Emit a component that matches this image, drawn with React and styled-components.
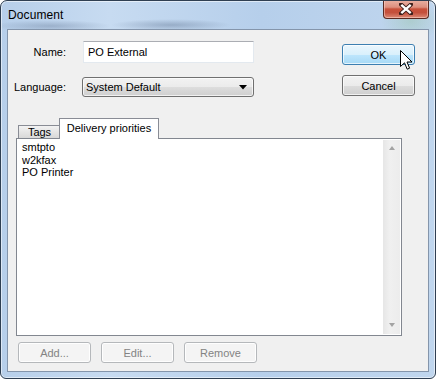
import React from "react";
import styled, { createGlobalStyle } from "styled-components";

const Global = createGlobalStyle`
  html, body { margin: 0; padding: 0; background: #ffffff; }
  body { font-family: "Liberation Sans", Arial, sans-serif; }
  * { box-sizing: border-box; }
`;

const Window = styled.div`
  position: relative;
  width: 436px;
  height: 379px;
  border: 1px solid #2f3f52;
  border-radius: 7px 7px 6px 6px;
  background:
    radial-gradient(ellipse 60px 6px at 50px 25px, rgba(90,110,140,0.35), transparent),
    radial-gradient(ellipse 60px 6px at 170px 24px, rgba(90,110,140,0.4), transparent),
    radial-gradient(ellipse 30px 20px at 410px 20px, rgba(140,190,150,0.35), transparent),
    linear-gradient(to right, #b7cfea 0%, #c7dbf1 25%, #b6cfeb 60%, #c0d6ee 100%);
  box-shadow: inset 0 0 0 1px rgba(255,255,255,0.55);
  display: flex;
  flex-direction: column;
  padding: 0 6px 6px 6px;
  overflow: hidden;
`;

const TitleBar = styled.div`
  height: 28px;
  display: flex;
  align-items: flex-start;
  justify-content: space-between;
`;

const Title = styled.div`
  font-size: 12px;
  color: #000;
  margin-top: 7px;
  margin-left: 1px;
  letter-spacing: 0.1px;
`;

const CloseButton = styled.div`
  width: 46px;
  height: 19px;
  margin-top: -1px;
  border: 1px solid #5a2a22;
  border-top: none;
  border-radius: 0 0 4px 4px;
  background: linear-gradient(
    to bottom,
    #eab2a4 0%,
    #dd8f7e 40%,
    #c8503a 50%,
    #c4503c 70%,
    #dc8a76 100%
  );
  box-shadow: inset 0 0 0 1px rgba(255,220,210,0.5);
  display: flex;
  align-items: center;
  justify-content: center;
`;

const Panel = styled.div`
  flex: 1;
  border: 1px solid #8495ab;
  background: #f0f0f0;
  display: flex;
  flex-direction: column;
`;

const TopArea = styled.div`
  display: flex;
  justify-content: space-between;
`;

const Form = styled.div`
  display: grid;
  grid-template-columns: 58px 172px;
  column-gap: 16px;
  row-gap: 14px;
  padding-top: 11px;
  align-items: center;
`;

const Label = styled.div`
  font-size: 11px;
  color: #000;
  text-align: right;
`;

const TextInput = styled.div`
  height: 22px;
  margin-left: 1px;
  background: #fff;
  border: 1px solid #e3e9ef;
  border-top-color: #abadb3;
  font-size: 11px;
  display: flex;
  align-items: center;
  padding-left: 4px;
  color: #000;
`;

const Select = styled.div`
  height: 20px;
  border: 1px solid #707070;
  border-radius: 3px;
  background: linear-gradient(to bottom, #f2f2f2 0%, #ebebeb 50%, #dddddd 51%, #cfcfcf 100%);
  box-shadow: inset 0 0 0 1px rgba(255,255,255,0.7);
  font-size: 11px;
  display: flex;
  align-items: center;
  justify-content: space-between;
  padding: 0 6px 0 3px;
  color: #000;
`;

const SideButtons = styled.div`
  display: flex;
  flex-direction: column;
  gap: 10px;
  padding-top: 14px;
  padding-right: 13px;
`;

const Button = styled.div`
  width: ${(p) => p.$w || 74}px;
  height: 21px;
  border-radius: 3px;
  font-size: 11px;
  display: flex;
  align-items: center;
  justify-content: center;
  border: 1px solid ${(p) => (p.$hot ? "#3c7fb1" : p.$disabled ? "#b5b8bb" : "#707070")};
  color: ${(p) => (p.$disabled ? "#838383" : "#000")};
  background: ${(p) =>
    p.$hot
      ? "linear-gradient(to bottom, #eaf6fd 0%, #d9f0fc 50%, #bee6fd 51%, #a7d9f5 100%)"
      : p.$disabled
      ? "#f4f4f4"
      : "linear-gradient(to bottom, #f2f2f2 0%, #ebebeb 50%, #dddddd 51%, #cfcfcf 100%)"};
  box-shadow: inset 0 0 0 1px rgba(255,255,255,${(p) => (p.$disabled ? 0.9 : 0.7)});
`;

const TabArea = styled.div`
  margin: 21px 0 0 8px;
  width: 386px;
  display: flex;
  flex-direction: column;
`;

const TabStrip = styled.div`
  display: flex;
  align-items: flex-end;
  height: 20px;
  padding-left: 2px;
  position: relative;
  z-index: 1;
`;

const Tab = styled.div`
  font-size: 11px;
  color: #000;
  border: 1px solid #898c95;
  border-bottom: none;
  display: flex;
  align-items: center;
  justify-content: center;
  ${(p) =>
    p.$active
      ? `
    height: 21px;
    margin-bottom: -1px;
    margin-left: -1px;
    width: 100px;
    background: #ffffff;
    padding-bottom: 2px;
  `
      : `
    height: 13px;
    width: 42px;
    background: linear-gradient(to bottom, #f2f2f2, #d8d8d8);
    border-right: none;
    line-height: 11px;
  `}
`;

const ListBox = styled.div`
  height: 198px;
  background: #fff;
  border: 1px solid #828790;
  display: flex;
`;

const Items = styled.div`
  flex: 1;
  padding: 2px 0 0 5px;
`;

const Item = styled.div`
  font-size: 11px;
  line-height: 12.5px;
  color: #000;
`;

const ScrollBar = styled.div`
  width: 17px;
  margin: 1px 1px 1px 0;
  background: linear-gradient(to right, #e6e6e6, #f0f0f0 40%, #ececec);
  display: flex;
  flex-direction: column;
  justify-content: space-between;
  align-items: center;
  padding: 6px 0 7px;
`;

const Arrow = styled.div`
  width: 0;
  height: 0;
  border-left: 3.5px solid transparent;
  border-right: 3.5px solid transparent;
  ${(p) =>
    p.$down
      ? "border-top: 4px solid #a3a3a3;"
      : "border-bottom: 4px solid #a3a3a3;"}
`;

const BottomButtons = styled.div`
  display: flex;
  gap: 10px;
  margin: 6px 0 0 10px;
`;

const Cursor = styled.svg`
  position: absolute;
  left: 399px;
  top: 49px;
  pointer-events: none;
`;

const CloseX = () => (
  <svg width="14" height="12" viewBox="0 0 14 12">
    <path d="M2 1.5 L12 10.5 M12 1.5 L2 10.5" stroke="#3d1e1a" strokeWidth="4.2" strokeLinecap="round" />
    <path d="M2.3 1.8 L11.7 10.2 M11.7 1.8 L2.3 10.2" stroke="#ffffff" strokeWidth="2.4" strokeLinecap="butt" />
  </svg>
);

const DropArrow = () => (
  <svg width="8" height="5" viewBox="0 0 8 5">
    <path d="M0 0 H8 L4 4.5 Z" fill="#000" />
  </svg>
);

export default function App() {
  return (
    <>
      <Global />
      <Window>
        <TitleBar>
          <Title>Document</Title>
          <CloseButton>
            <CloseX />
          </CloseButton>
        </TitleBar>
        <Panel>
          <TopArea>
            <Form>
              <Label>Name:</Label>
              <TextInput>PO External</TextInput>
              <Label>Language:</Label>
              <Select>
                <span>System Default</span>
                <DropArrow />
              </Select>
            </Form>
            <SideButtons>
              <Button $hot $w={73}>OK</Button>
              <Button $w={73}>Cancel</Button>
            </SideButtons>
          </TopArea>
          <TabArea>
            <TabStrip>
              <Tab>Tags</Tab>
              <Tab $active>Delivery priorities</Tab>
            </TabStrip>
            <ListBox>
              <Items>
                <Item>smtpto</Item>
                <Item>w2kfax</Item>
                <Item>PO Printer</Item>
              </Items>
              <ScrollBar>
                <Arrow />
                <Arrow $down />
              </ScrollBar>
            </ListBox>
          </TabArea>
          <BottomButtons>
            <Button $disabled $w={73}>Add...</Button>
            <Button $disabled $w={73}>Edit...</Button>
            <Button $disabled $w={73}>Remove</Button>
          </BottomButtons>
        </Panel>
        <Cursor width="13" height="21" viewBox="0 0 13 21">
          <path
            d="M0.5 0.5 V16.5 L4.5 12.8 L7.2 19.2 L9.6 18.2 L7 12 H12 Z"
            fill="#fff"
            stroke="#000"
            strokeWidth="1"
            strokeLinejoin="miter"
          />
        </Cursor>
      </Window>
    </>
  );
}
